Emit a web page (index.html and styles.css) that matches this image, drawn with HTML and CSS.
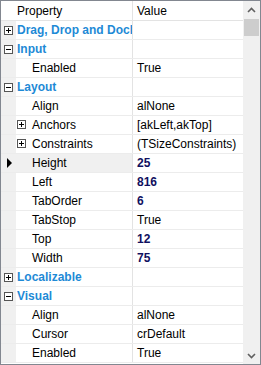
FILE: index.html
```html
<!DOCTYPE html>
<html>
<head>
<meta charset="utf-8">
<link rel="stylesheet" href="styles.css">
</head>
<body>
<div class="inspector">
  <div class="grid">
    <div class="row header">
      <div class="gut"></div>
      <div class="name">Property</div>
      <div class="val">Value</div>
    </div>
    <div class="row cat"><div class="gut"><span class="box plus"></span></div><div class="name">Drag, Drop and Dock</div><div class="val"></div></div>
    <div class="row cat"><div class="gut"><span class="box"></span></div><div class="name">Input</div><div class="val"></div></div>
    <div class="row"><div class="gut"></div><div class="name sub">Enabled</div><div class="val">True</div></div>
    <div class="row cat"><div class="gut"><span class="box"></span></div><div class="name">Layout</div><div class="val"></div></div>
    <div class="row"><div class="gut"></div><div class="name sub">Align</div><div class="val">alNone</div></div>
    <div class="row"><div class="gut"></div><div class="name sub"><span class="box plus inl"></span>Anchors</div><div class="val">[akLeft,akTop]</div></div>
    <div class="row"><div class="gut"></div><div class="name sub"><span class="box plus inl"></span>Constraints</div><div class="val">(TSizeConstraints)</div></div>
    <div class="row sel"><div class="gut"><span class="tri"></span></div><div class="name sub">Height</div><div class="val b">25</div></div>
    <div class="row"><div class="gut"></div><div class="name sub">Left</div><div class="val b">816</div></div>
    <div class="row"><div class="gut"></div><div class="name sub">TabOrder</div><div class="val b">6</div></div>
    <div class="row"><div class="gut"></div><div class="name sub">TabStop</div><div class="val">True</div></div>
    <div class="row"><div class="gut"></div><div class="name sub">Top</div><div class="val b">12</div></div>
    <div class="row"><div class="gut"></div><div class="name sub">Width</div><div class="val b">75</div></div>
    <div class="row cat"><div class="gut"><span class="box plus"></span></div><div class="name">Localizable</div><div class="val"></div></div>
    <div class="row cat"><div class="gut"><span class="box"></span></div><div class="name">Visual</div><div class="val"></div></div>
    <div class="row"><div class="gut"></div><div class="name sub">Align</div><div class="val">alNone</div></div>
    <div class="row"><div class="gut"></div><div class="name sub">Cursor</div><div class="val">crDefault</div></div>
    <div class="row"><div class="gut"></div><div class="name sub">Enabled</div><div class="val">True</div></div>
  </div>
  <div class="scroll">
    <div class="arrow"><svg width="9" height="6" viewBox="0 0 9 6"><path d="M1 5 L4.5 1.5 L8 5" fill="none" stroke="#606060" stroke-width="1.6"/></svg></div>
    <div class="thumb"></div>
    <div class="track"></div>
    <div class="arrow"><svg width="9" height="6" viewBox="0 0 9 6"><path d="M1 1 L4.5 4.5 L8 1" fill="none" stroke="#606060" stroke-width="1.6"/></svg></div>
  </div>
</div>
</body>
</html>
```
FILE: styles.css
```css
html, body { margin: 0; padding: 0; background: #fff; }
body { font-family: "Liberation Sans", Arial, sans-serif; font-size: 12px; color: #000; }
.inspector {
  width: 259px; height: 363px;
  border: 1px solid #828790;
  display: flex; overflow: hidden;
  background: #fff;
}
.grid { width: 242px; display: flex; flex-direction: column; overflow: hidden; }
.row { display: flex; height: 18px; border-bottom: 1px solid #ececec; flex: none; }
.row.header { height: 19px; border-bottom: 1px solid #e3e3e3; background: #fff; }
.row.header .gut { background: #fff; }
.row.header .name { border-right: 1px solid #e3e3e3; }
.gut { width: 15px; flex: none; background: #f0f0f0; display: flex; align-items: center; justify-content: center; }
.name { width: 115px; flex: none; display: flex; align-items: center; padding-left: 1px; border-right: 1px solid #e3e3e3; white-space: nowrap; overflow: hidden; }
.val { flex: 1; display: flex; align-items: center; padding-left: 4px; white-space: nowrap; overflow: hidden; }
.name.sub { padding-left: 16px; position: relative; width: 100px; }
.sel .name { background: #f0f0f0; }
.cat .name { font-weight: bold; color: #1e8ad6; font-size: 12px; }
.val.b { font-weight: bold; color: #101060; }
.box { width: 7px; height: 7px; border: 1px solid #555; background: #fff; position: relative; display: block; }
.box::before { content: ""; position: absolute; left: 1px; top: 3px; width: 5px; height: 1px; background: #000; }
.box.plus::after { content: ""; position: absolute; left: 3px; top: 1px; width: 1px; height: 5px; background: #000; }
.box.inl { position: absolute; left: 1px; top: 4px; }
.tri { width: 0; height: 0; border-top: 5px solid transparent; border-bottom: 5px solid transparent; border-left: 5px solid #000; margin-left: 2px; }
.scroll { width: 17px; flex: none; background: #f0f0f0; display: flex; flex-direction: column; }
.arrow { height: 17px; display: flex; align-items: center; justify-content: center; flex: none; }
.thumb { height: 17px; margin: 1px 1px 0 1px; background: #cdcdcd; flex: none; }
.track { flex: 1; }
```
